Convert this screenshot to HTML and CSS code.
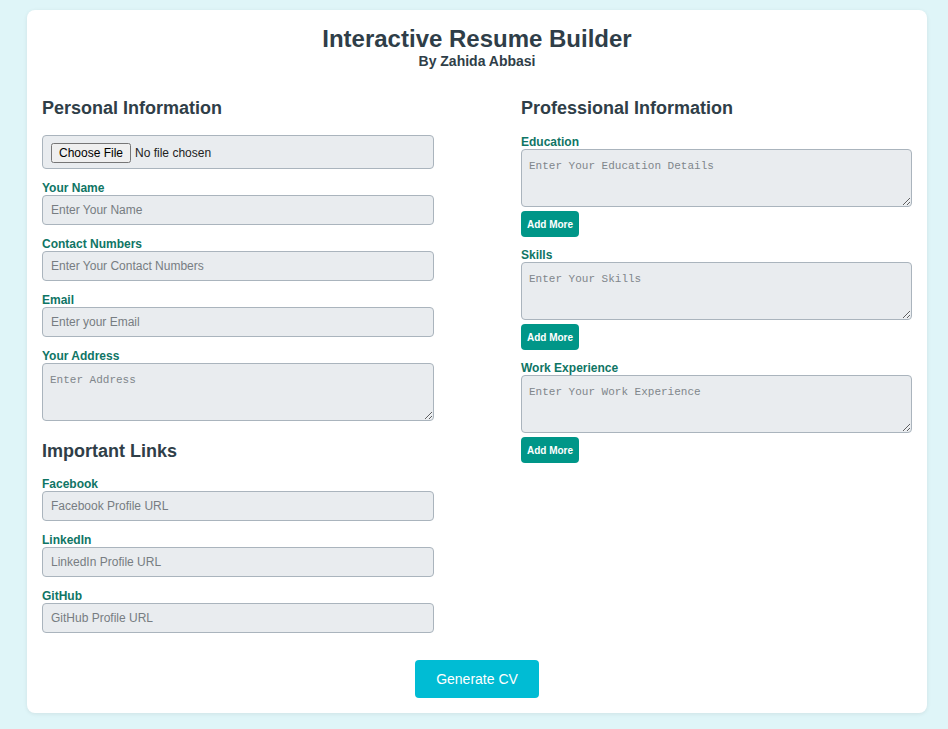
FILE: index.html
```html
<!DOCTYPE html>
<html lang="en">
<head>
<meta charset="utf-8">
<title>Interactive Resume Builder</title>
<link rel="stylesheet" href="styles.css">
</head>
<body>
<div class="card">
  <header class="head">
    <h1 class="title">Interactive Resume Builder</h1>
    <p class="subtitle">By Zahida Abbasi</p>
  </header>
  <div class="columns">
    <section class="col">
      <h2 class="section-title">Personal Information</h2>
      <div class="group">
        <input class="file-input" type="file">
      </div>
      <div class="group">
        <label class="label">Your Name</label>
        <input class="field" type="text" placeholder="Enter Your Name">
      </div>
      <div class="group">
        <label class="label">Contact Numbers</label>
        <input class="field" type="text" placeholder="Enter Your Contact Numbers">
      </div>
      <div class="group">
        <label class="label">Email</label>
        <input class="field" type="text" placeholder="Enter your Email">
      </div>
      <div class="group">
        <label class="label">Your Address</label>
        <textarea class="area" placeholder="Enter Address"></textarea>
      </div>
      <h2 class="section-title links-title">Important Links</h2>
      <div class="group">
        <label class="label">Facebook</label>
        <input class="field" type="text" placeholder="Facebook Profile URL">
      </div>
      <div class="group">
        <label class="label">LinkedIn</label>
        <input class="field" type="text" placeholder="LinkedIn Profile URL">
      </div>
      <div class="group">
        <label class="label">GitHub</label>
        <input class="field" type="text" placeholder="GitHub Profile URL">
      </div>
    </section>
    <section class="col col-right">
      <h2 class="section-title pro-title">Professional Information</h2>
      <div class="pgroup">
        <label class="label">Education</label>
        <textarea class="area" placeholder="Enter Your Education Details"></textarea>
        <button class="add-btn" type="button">Add More</button>
      </div>
      <div class="pgroup">
        <label class="label">Skills</label>
        <textarea class="area" placeholder="Enter Your Skills"></textarea>
        <button class="add-btn" type="button">Add More</button>
      </div>
      <div class="pgroup">
        <label class="label">Work Experience</label>
        <textarea class="area" placeholder="Enter Your Work Experience"></textarea>
        <button class="add-btn" type="button">Add More</button>
      </div>
    </section>
  </div>
  <div class="actions">
    <button class="generate-btn" type="button">Generate CV</button>
  </div>
</div>
</body>
</html>
```
FILE: styles.css
```css
* { box-sizing: border-box; }
html, body { margin: 0; padding: 0; }
body {
  background: #dff5f8;
  font-family: "Liberation Sans", Arial, sans-serif;
  min-height: 729px;
  padding: 10px 0 16px 27px;
}
.card {
  width: 900px;
  background: #ffffff;
  border-radius: 8px;
  box-shadow: 0 1px 4px rgba(0, 0, 0, 0.08);
  padding: 15px;
}
.head { text-align: center; }
.title {
  margin: 0;
  font-size: 24px;
  line-height: 28px;
  font-weight: bold;
  color: #2f3e48;
}
.subtitle {
  margin: 0;
  font-size: 14px;
  line-height: 17px;
  font-weight: bold;
  color: #2f3e48;
}
.columns {
  display: flex;
  justify-content: space-between;
  margin-top: 28px;
}
.col { width: 392px; }
.col-right { width: 391px; }
.section-title {
  margin: 0 0 16px 0;
  font-size: 18px;
  line-height: 21px;
  font-weight: bold;
  color: #2f3e48;
}
.pro-title { margin-bottom: 15px; }
.links-title { margin-top: 20px; margin-bottom: 14px; }
.group { margin-bottom: 11px; }
.label {
  display: block;
  padding-top: 1px;
  font-size: 12px;
  line-height: 14px;
  font-weight: bold;
  color: #0f7565;
}
.field, .file-input, .area {
  display: block;
  width: 100%;
  background: #e9ecef;
  border: 1px solid #aab4bd;
  border-radius: 4px;
  color: #333;
}
.field {
  height: 30px;
  padding: 0 8px;
  font-family: "Liberation Sans", Arial, sans-serif;
  font-size: 12px;
}
.field::placeholder { color: #777d82; }
.file-input {
  height: 34px;
  padding: 7px 8px;
  font-family: "Liberation Sans", Arial, sans-serif;
  font-size: 12px;
  color: #222;
}
.area {
  height: 58px;
  padding: 10px 7px 8px;
  font-family: "Liberation Mono", "DejaVu Sans Mono", monospace;
  font-size: 11px;
  resize: vertical;
}
.area::placeholder { color: #80868b; }
.pgroup { margin-bottom: 10px; }
.add-btn {
  display: block;
  margin-top: 4px;
  width: 58px;
  height: 26px;
  padding: 0;
  border: none;
  border-radius: 4px;
  background: #009688;
  color: #ffffff;
  font-family: "Liberation Sans", Arial, sans-serif;
  font-size: 10px;
  font-weight: bold;
}
.actions {
  display: flex;
  justify-content: center;
  margin-top: 16px;
}
.generate-btn {
  width: 124px;
  height: 38px;
  border: none;
  border-radius: 4px;
  background: #00bcd4;
  color: #ffffff;
  font-family: "Liberation Sans", Arial, sans-serif;
  font-size: 14px;
}
```
